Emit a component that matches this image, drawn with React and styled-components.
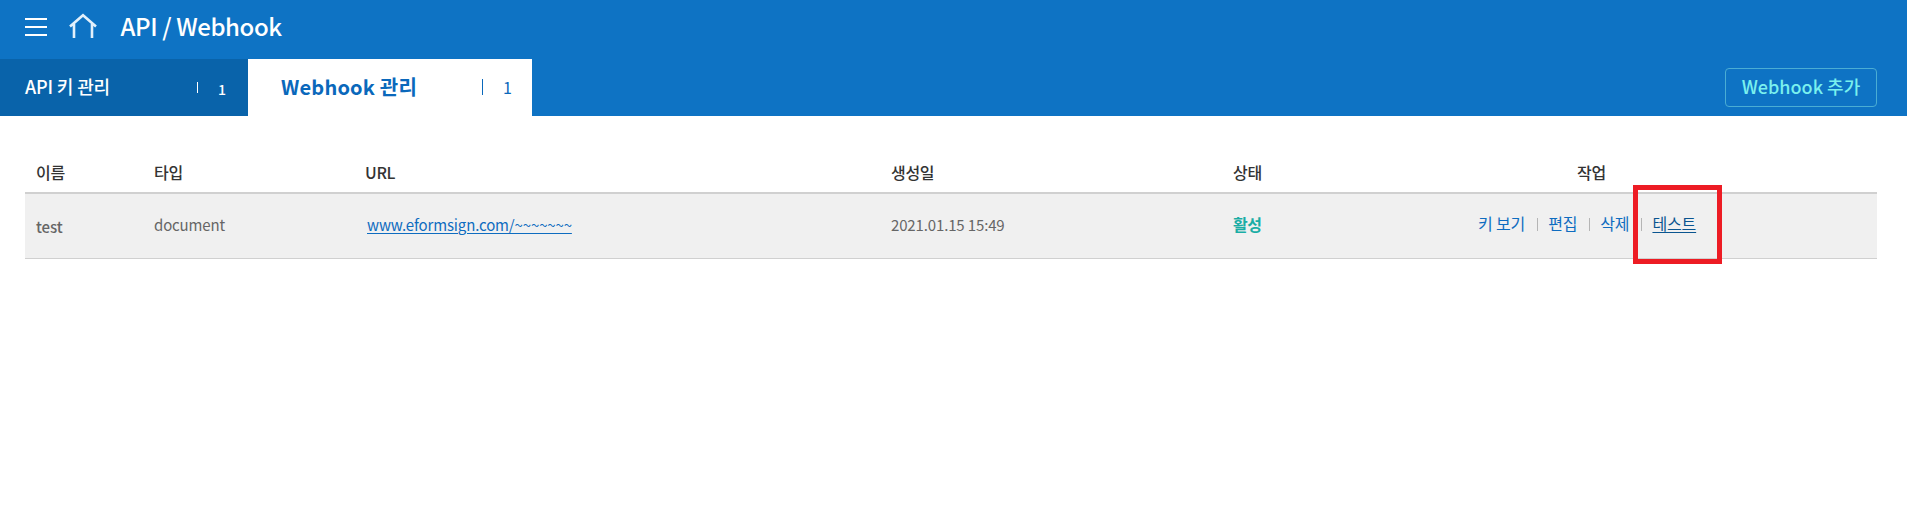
import React from 'react';
import styled, { createGlobalStyle } from 'styled-components';

const GlobalStyle = createGlobalStyle`
  * { box-sizing: border-box; }
  body {
    margin: 0;
    background: #fff;
    font-family: "Noto Sans CJK KR", "Noto Sans", sans-serif;
    font-size: 16px;
    color: #666;
  }
`;

const Page = styled.div`
  width: 100%;
  min-height: 505px;
`;

const TopBar = styled.header`
  display: flex;
  align-items: center;
  height: 59px;
  padding-left: 25px;
  background: #0e73c4;
  color: #fff;
`;

const MenuIcon = styled.svg`
  width: 22px;
  height: 18px;
  margin-top: -5px;
`;

const HomeIcon = styled.svg`
  width: 28px;
  height: 26px;
  margin: -7px 0 0 21.5px;
`;

const Title = styled.h1`
  margin: -7px 0 0 24px;
  font-size: 24px;
  font-weight: 500;
  line-height: 36px;
  letter-spacing: -0.4px;
  white-space: nowrap;
`;

const TabBar = styled.nav`
  display: flex;
  align-items: stretch;
  height: 57px;
  background: #0e73c4;
`;

const Tab = styled.div`
  display: flex;
  align-items: center;
  width: ${(p) => p.$width}px;
  padding: ${(p) => (p.$active ? '0 20px 2px 33px' : '0 21px 2px 25px')};
  background: ${(p) => (p.$active ? '#fff' : '#0963aa')};
  color: ${(p) => (p.$active ? '#0a68bb' : '#fff')};
`;

const TabLabel = styled.span`
  flex: 1;
  font-size: ${(p) => p.$size}px;
  font-weight: ${(p) => p.$weight};
  line-height: 30px;
  letter-spacing: ${(p) => p.$spacing || 0}px;
  padding-bottom: ${(p) => p.$lift || 0}px;
  white-space: nowrap;
`;

const TabDivider = styled.span`
  width: 1px;
  height: ${(p) => p.$height}px;
  margin: 1px 20px 0 0;
  background: currentColor;
`;

const TabCount = styled.span`
  width: ${(p) => p.$width}px;
  padding-top: ${(p) => p.$drop || 0}px;
  font-size: ${(p) => p.$size}px;
  font-weight: ${(p) => p.$weight};
  line-height: 24px;
`;

const AddButton = styled.button`
  align-self: flex-start;
  width: 152px;
  height: 39px;
  margin: 9px 30px 0 auto;
  padding: 0 0 4px;
  border: 1px solid #4aadd4;
  border-radius: 4px;
  background: transparent;
  color: #7af0ee;
  font: 500 18px/30px "Noto Sans CJK KR", sans-serif;
  white-space: nowrap;
`;

const Table = styled.section`
  margin: 35px 30px 0 25px;
`;

const columns = '118px 212px 525px 342px 245px 1fr';

const HeadRow = styled.div`
  display: grid;
  grid-template-columns: ${columns};
  align-items: center;
  height: 43px;
  padding-left: 11px;
  border-bottom: 2px solid #d0d0d0;
  color: #333;
  font-weight: 500;
  letter-spacing: -0.3px;
`;

const HeadCell = styled.span`
  padding-left: ${(p) => p.$indent || 0}px;
  line-height: 24px;
`;

const UrlHeadCell = styled(HeadCell)`
  margin-left: -1px;
`;

const Row = styled.div`
  display: grid;
  grid-template-columns: ${columns};
  align-items: center;
  height: 65px;
  padding: 0 0 3px 11px;
  border-bottom: 1px solid #d0d0d0;
  background: #f0f0f0;
`;

const Cell = styled.span`
  padding-top: ${(p) => p.$drop || 0}px;
  font-size: 15px;
  letter-spacing: -0.14px;
  font-weight: ${(p) => p.$weight || 400};
  line-height: 24px;
  color: #666;
  white-space: nowrap;
`;

const Status = styled(Cell)`
  padding-bottom: 2px;
  font-size: 16px;
  letter-spacing: -0.5px;
  font-weight: 700;
  color: #1aada5;
`;

const UrlLink = styled.a`
  margin-left: 1px;
  color: #0e6cc0;
  text-decoration: underline;
  text-decoration-thickness: 1px;
  text-underline-offset: 2px;
`;

const Actions = styled.div`
  display: flex;
  align-items: center;
  padding-bottom: 3px;
  line-height: 24px;
  letter-spacing: -0.15px;
  white-space: nowrap;
`;

const Action = styled.a`
  color: ${(p) => (p.$focused ? '#0a5590' : '#0e6cc0')};
  text-decoration: ${(p) => (p.$focused ? 'underline' : 'none')};
  text-decoration-thickness: 1px;
  text-underline-offset: 2px;
`;

const ActionDivider = styled.span`
  width: 1px;
  height: 13px;
  margin: 2px 10px 0 12px;
  background: #b5b5b5;
`;

const HighlightAnchor = styled.span`
  position: relative;
`;

const Highlight = styled.span`
  position: absolute;
  left: -19.5px;
  top: -26px;
  width: 89px;
  height: 79px;
  border: 5px solid #ed1c24;
  pointer-events: none;
`;

export default function App() {
  return (
    <Page>
      <GlobalStyle />
      <TopBar>
        <MenuIcon viewBox="0 0 22 18" fill="#fff" shapeRendering="crispEdges">
          <path d="M0 0h22v2H0zM0 8h22v2H0zM0 16h22v2H0z" />
        </MenuIcon>
        <HomeIcon viewBox="0 0 28 26" fill="none" stroke="#e3f0fb" strokeWidth="2.6">
          <path d="M1 13.5L14 2.2L27 13.5M5 11V25M23 11V25" />
        </HomeIcon>
        <Title>API / Webhook</Title>
      </TopBar>
      <TabBar>
        <Tab $width={248}>
          <TabLabel $size={18} $weight={500} $spacing={-0.15} $lift={2}>API 키 관리</TabLabel>
          <TabDivider $height={11} />
          <TabCount $size={14} $weight={500} $drop={4} $width={9}>1</TabCount>
        </Tab>
        <Tab $width={284} $active>
          <TabLabel $size={20} $weight={700} $spacing={0.2}>Webhook 관리</TabLabel>
          <TabDivider $height={16} />
          <TabCount $size={16} $weight={400} $width={9}>1</TabCount>
        </Tab>
        <AddButton>Webhook 추가</AddButton>
      </TabBar>
      <Table>
        <HeadRow>
          <HeadCell>이름</HeadCell>
          <HeadCell>타입</HeadCell>
          <UrlHeadCell>URL</UrlHeadCell>
          <HeadCell>생성일</HeadCell>
          <HeadCell>상태</HeadCell>
          <HeadCell $indent={99}>작업</HeadCell>
        </HeadRow>
        <Row>
          <Cell $weight={500} $drop={5}>test</Cell>
          <Cell>document</Cell>
          <Cell><UrlLink>www.eformsign.com/~~~~~~~</UrlLink></Cell>
          <Cell>2021.01.15 15:49</Cell>
          <Status>활성</Status>
          <Actions>
            <Action>키 보기</Action>
            <ActionDivider />
            <Action>편집</Action>
            <ActionDivider />
            <Action>삭제</Action>
            <ActionDivider />
            <HighlightAnchor>
              <Action $focused>테스트</Action>
              <Highlight />
            </HighlightAnchor>
          </Actions>
        </Row>
      </Table>
    </Page>
  );
}
